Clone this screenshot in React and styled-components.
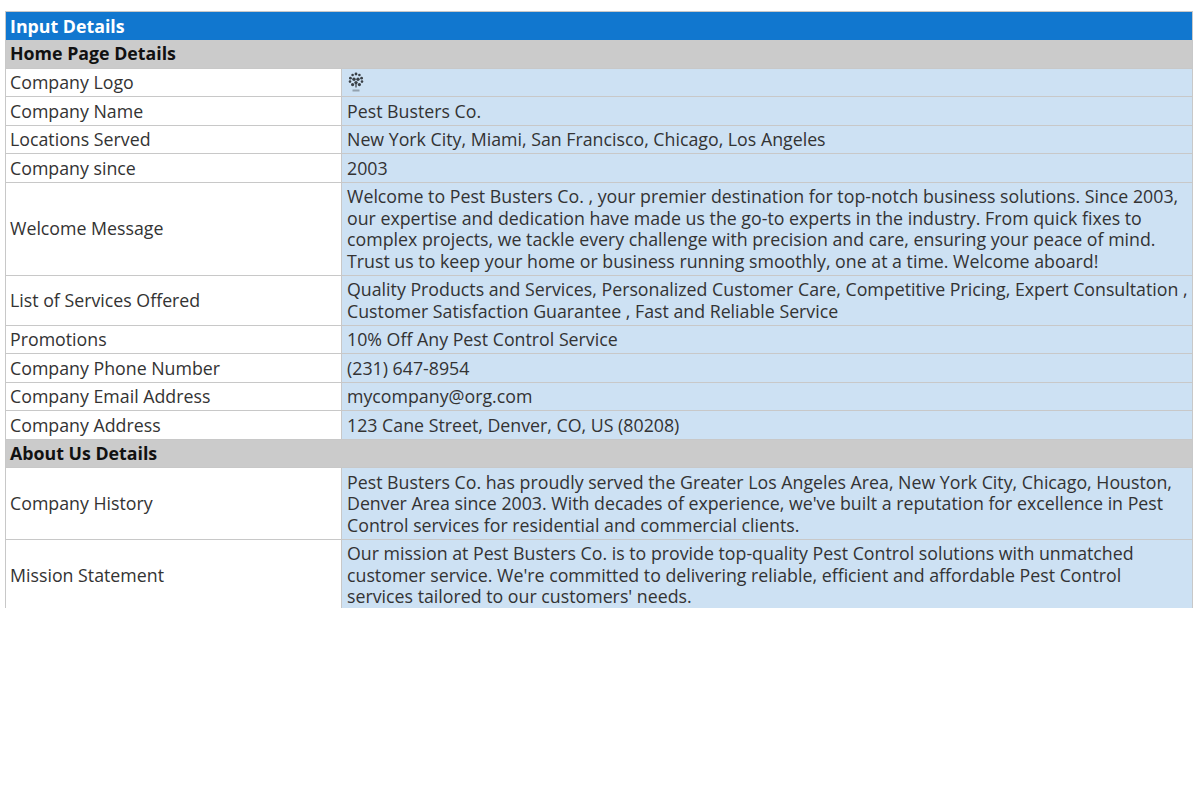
import React from 'react'
import styled, { createGlobalStyle } from 'styled-components'

const GlobalStyle = createGlobalStyle`
  html, body {
    margin: 0;
    padding: 0;
    background: #fff;
  }
`

const Page = styled.div`
  padding: 11px 7px 0 5px;
  font-family: "Open Sans", "Noto Sans", sans-serif;
  font-size: 17.78px;
  line-height: 21.5px;
  color: #333;
`

const Viewport = styled.div`
  height: 597px;
  overflow: hidden;
`

const Table = styled.table`
  width: 100%;
  table-layout: fixed;
  border-collapse: collapse;
  border: 1px solid #c8c8c8;
  border-bottom: 0;
`

const TitleCell = styled.th`
  height: 28px;
  padding: 3.5px 4px 2.5px;
  box-sizing: border-box;
  text-align: left;
  font-weight: 700;
  color: #fff;
  background: #1177cf;
`

const SectionCell = styled.th`
  height: 28.5px;
  padding: 3.5px 4px 2.5px;
  box-sizing: border-box;
  text-align: left;
  font-weight: 700;
  color: #111;
  background: #cbcbcb;
`

const LabelCell = styled.td`
  padding: 3.5px 4px 2.5px;
  border: 1px solid #c8c8c8;
  background: #fff;
  vertical-align: middle;
`

const ValueCell = styled.td`
  padding: 3.5px 2px 2.5px 5px;
  border: 1px solid #c8c8c8;
  background: #cde1f3;
  vertical-align: middle;
`

const Logo = styled.svg`
  display: block;
  width: 20px;
  height: 21px;
`

function FlowerLogo() {
  return (
    <Logo viewBox="0 0 20 21" aria-label="Company logo">
      <g fill="#3a4046">
        <circle cx="9" cy="2" r="1.4" />
        <circle cx="5.6" cy="3" r="1.3" />
        <circle cx="12.4" cy="3" r="1.3" />
        <circle cx="3.4" cy="6.2" r="1.4" />
        <circle cx="14.6" cy="6.2" r="1.4" />
        <circle cx="3" cy="9.6" r="1.3" />
        <circle cx="15" cy="9.6" r="1.3" />
        <circle cx="5.6" cy="12.6" r="1.6" />
        <circle cx="12.4" cy="12.6" r="1.6" />
        <circle cx="7" cy="7.2" r="1.7" />
        <circle cx="11" cy="7.2" r="1.7" />
        <circle cx="9" cy="10.6" r="1.7" />
        <rect x="8.4" y="11" width="1.2" height="4.5" />
      </g>
      <rect x="5.5" y="17.5" width="7" height="2" fill="#3a4046" opacity="0.4" />
    </Logo>
  )
}

const homeRows = [
  ['Company Logo', <FlowerLogo />],
  ['Company Name', 'Pest Busters Co.'],
  ['Locations Served', 'New York City, Miami, San Francisco, Chicago, Los Angeles'],
  ['Company since', '2003'],
  ['Welcome Message', 'Welcome to Pest Busters Co. , your premier destination for top-notch business solutions. Since 2003, our expertise and dedication have made us the go-to experts in the industry. From quick fixes to complex projects, we tackle every challenge with precision and care, ensuring your peace of mind. Trust us to keep your home or business running smoothly, one at a time. Welcome aboard!'],
  ['List of Services Offered', 'Quality Products and Services, Personalized Customer Care, Competitive Pricing, Expert Consultation , Customer Satisfaction Guarantee , Fast and Reliable Service'],
  ['Promotions', '10% Off Any Pest Control Service'],
  ['Company Phone Number', '(231) 647-8954'],
  ['Company Email Address', 'mycompany@org.com'],
  ['Company Address', '123 Cane Street, Denver, CO, US (80208)'],
]

const aboutRows = [
  ['Company History', "Pest Busters Co. has proudly served the Greater Los Angeles Area, New York City, Chicago, Houston, Denver Area since 2003. With decades of experience, we've built a reputation for excellence in Pest Control services for residential and commercial clients."],
  ['Mission Statement', "Our mission at Pest Busters Co. is to provide top-quality Pest Control solutions with unmatched customer service. We're committed to delivering reliable, efficient and affordable Pest Control services tailored to our customers' needs."],
]

function Rows({ rows }) {
  return rows.map(([label, value]) => (
    <tr key={label}>
      <LabelCell>{label}</LabelCell>
      <ValueCell>{value}</ValueCell>
    </tr>
  ))
}

export default function App() {
  return (
    <Page>
      <GlobalStyle />
      <Viewport>
        <Table>
          <colgroup>
            <col style={{ width: 336 }} />
            <col />
          </colgroup>
          <tbody>
            <tr>
              <TitleCell colSpan={2}>Input Details</TitleCell>
            </tr>
            <tr>
              <SectionCell colSpan={2}>Home Page Details</SectionCell>
            </tr>
            <Rows rows={homeRows} />
            <tr>
              <SectionCell colSpan={2}>About Us Details</SectionCell>
            </tr>
            <Rows rows={aboutRows} />
          </tbody>
        </Table>
      </Viewport>
    </Page>
  )
}
